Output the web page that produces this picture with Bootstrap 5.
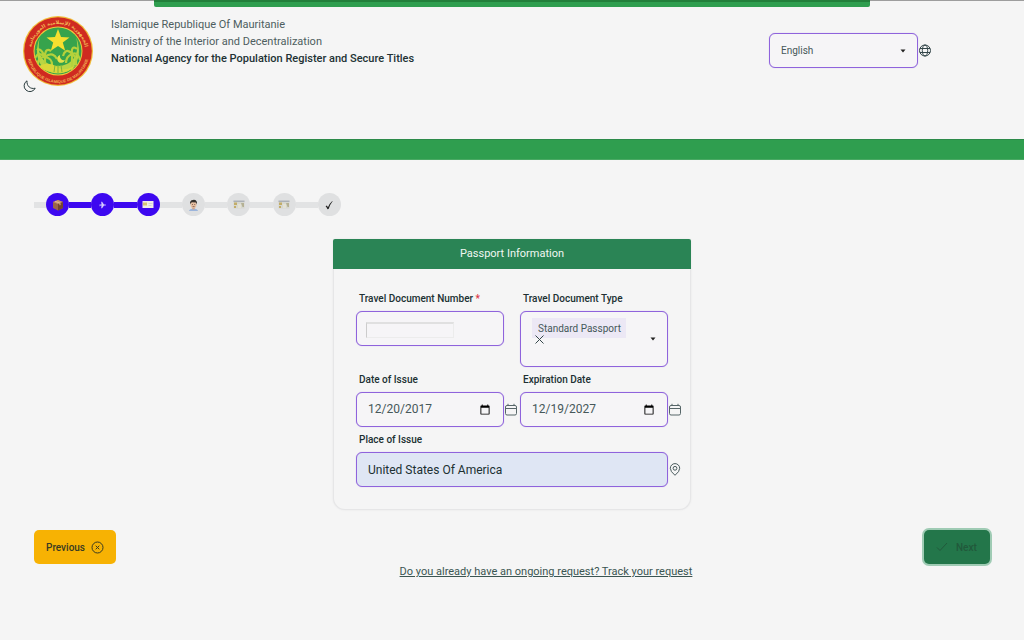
<!DOCTYPE html>
<html lang="en">
<head>
<meta charset="utf-8">
<meta name="viewport" content="width=device-width, initial-scale=1">
<title>Passport Information</title>
<link href="https://cdn.jsdelivr.net/npm/bootstrap@5.3.0/dist/css/bootstrap.min.css" rel="stylesheet">
<style>
body{background:#f5f5f5;color:#2b3d3f;font-family:Roboto,"Liberation Sans",sans-serif;font-size:11px;line-height:17px}
svg{display:block;flex:none}
.top-track{height:7px;border-top:1px solid #9d9d9d}
.top-track span{display:block;width:70%;height:7px;margin:-1px auto 0;background:#2f9e4f;border-top:2px solid #237f3b;border-radius:0 0 2px 2px}
.site-head{min-height:132px;padding:8px 106px 0 23px}
.emblem{position:relative;width:70px}
.theme-btn{position:absolute;left:0;top:65px;padding:0;border:0;background:none;color:#2b3d3f}
.agency{padding:1px 0 0 18px;color:#4d5e60}
.agency strong{font-weight:500;color:#223234}
.field,.number-box{border:1px solid #8f63dc;border-radius:6px;background-color:#f6f5f7;height:35px;box-shadow:0 0 1px #b9a3e6}
.field{color:#46585a;width:100%;padding:0 12px 0 11px;font-size:12px;appearance:none;min-width:0}
select.field{font-size:10px;background-image:url("data:image/svg+xml,%3Csvg xmlns='http://www.w3.org/2000/svg' width='6' height='4'%3E%3Cpath d='M.5.5h5L3 3.5z' fill='%23222'/%3E%3C/svg%3E");background-repeat:no-repeat;background-position:right 11px center}
.lang{width:149px;margin-top:18px}
.band{height:21px;background:#2f9e4f;border-top:1px solid #2c8a49;border-bottom:1px solid #4aa964}
.steps{list-style:none;padding:0;margin:33px 34px 0;max-width:307px}
.steps li{display:flex;align-items:center;flex:1}
.steps li:first-child{flex:none}
.steps li::before{content:"";flex:1;height:6px;background:#e2e3e4}
.steps li:first-child::before{flex:none;width:12px}
.steps .dot{width:23px;height:23px;border-radius:50%;background:#dfe0e1;display:flex;align-items:center;justify-content:center}
.steps .done .dot,.steps .done + .done::before{background:#3d08f0}
.form-card{max-width:358px;margin:23px auto 0;border:1px solid #e6e6e7;border-top:0;border-radius:3px 3px 12px 12px;background:#f5f5f5;box-shadow:0 0 2px #e4e4e5}
.form-card header{height:30px;line-height:30px;background:#2a8455;color:#f0f7f2;text-align:center;border-radius:2px 2px 0 0;font-size:11px;margin:0 -1px}
.form-grid{display:grid;grid-template-columns:1fr 1fr;column-gap:16px;padding:20px 22px 22px}
.form-grid label{height:22px;line-height:20px;padding-left:3px;color:#203032;display:block;font-weight:500;font-size:10px}
.with-icon{position:relative}
.with-icon>svg{position:absolute;left:100%;top:11px}
.number-box{display:flex;align-items:center;padding:0 9px}
.number-box input{width:88px;height:16px;border:1px solid #ececec;border-top:2px solid #e0e0e0;border-left:1px solid #ccc;background:transparent;padding:0 4px;margin-top:3px}
.kind{position:relative}
.kind select.field{height:56px;padding:0 10px 22px 17px;background-image:url("data:image/svg+xml,%3Csvg xmlns='http://www.w3.org/2000/svg' width='6' height='4'%3E%3Cpath d='M.5.5h5L3 3.5z' fill='%23222'/%3E%3C/svg%3E"),linear-gradient(#ece8f5,#ece8f5);background-size:6px 4px,94px 20px;background-position:right 11px center,11px 6px}
.clear-btn{position:absolute;left:15px;top:24px;padding:0;border:0;background:none;color:#35474a}
.third{margin-top:3px}
.field::-webkit-calendar-picker-indicator{width:12px;height:12px;padding:0;margin:0}
input.place{background:#dfe6f4;color:#203032}
.foot{margin:20px 34px 0}
.act{border:0;border-radius:5px;height:34px;font-size:10px;font-weight:500;display:flex;align-items:center}
.prev{background:#f7b203;color:#383a22;padding:0 12px;gap:6px;width:82px}
.next{background:#23764a;color:#21593b;padding:0 12px;gap:8px;width:66px;box-shadow:0 0 0 2px #9fcbb4}
.track-link{color:#3b5552;font-size:11px;padding:33px 0 0 52px}
</style>
</head>
<body>
<div class="top-track"><span></span></div>
<header class="site-head d-flex align-items-start">
  <div class="emblem">
    <svg width="70" height="72" viewBox="0 0 70 72" role="img" aria-label="Seal of Mauritania">
      <defs><path id="arcUp" d="M8 36A27 27 0 0 1 62 36"/><path id="arcDown" d="M4 37A31 31 0 0 0 66 37"/></defs>
      <circle cx="35" cy="36" r="35" fill="#f0bd39"/><circle cx="35" cy="36" r="33.800" fill="#cf2a20"/>
      <circle cx="35" cy="36" r="24.500" fill="#f0c63c"/><circle cx="35" cy="36" r="23.500" fill="#36a34c"/>
      <path d="M17 22C9 42 18 58 35 58.500C52 58 61 42 53 22C58 40 48 51 35 51S12 40 17 22Z" fill="#b9d544"/>
      <path d="M35 14l3 8 8.500.4-6.700 5.200 2.400 8.200-7.200-4.700-7.200 4.700 2.400-8.200-6.700-5.200 8.500-.4Z" fill="#f7df2f"/>
      <g stroke="#b5d13b" stroke-width="2.200" fill="none"><path d="M22 55V42M22 42C17 37 14 39 12 43M22 42C18 33 15 34 14 35M22 42C22 34 25 34 28 36M22 42C28 37 32 40 34 44M22 42C17 42 15 45 15 49M22 42C28 43 29 46 29 50M49 55V39M49 39C44 33 41 37 40 41M49 39C48 31 52 32 54 34M49 39C54 37 56 41 57 45M49 39C44 41 43 45 43 48M49 39C54 42 53 46 53 50"/></g>
      <path d="M16 51q10-5 18 1t20-3q-7 9-19 9T16 51Z" fill="#d9d839"/><path d="M37 40a4 4 0 1 0 5 5 4 4 0 0 1-5-5" fill="#e3e24a"/>
      <path d="M31 57l1-7M35 58v-8M39 57l-1-7" stroke="#7cb53c" fill="none"/>
      <text font-family="DejaVu Sans" font-size="5" font-weight="bold" fill="#f2b955"><textPath href="#arcUp" startOffset="50%" text-anchor="middle">الجمهورية الإسلامية الموريتانية</textPath></text>
      <text font-family="Liberation Sans" font-size="4" font-weight="bold" fill="#f2b055"><textPath href="#arcDown" startOffset="50%" text-anchor="middle">REPUBLIQUE ISLAMIQUE DE MAURITANIE</textPath></text>
    </svg>
    <button type="button" class="theme-btn" aria-label="Dark mode"><svg width="13" height="13" viewBox="0 0 13 13" fill="#f5f5f5" stroke="currentColor" stroke-linejoin="round"><path d="M4 .8A5.800 5.800 0 1 0 12.200 8.200C7.500 9.500 3.500 6 4 .8Z"/></svg></button>
  </div>
  <div class="agency flex-grow-1">Islamique Republique Of Mauritanie<br>Ministry of the Interior and Decentralization<br><strong>National Agency for the Population Register and Secure Titles</strong></div>
  <div class="with-icon lang">
    <select class="field" aria-label="Language"><option>English</option></select>
    <svg width="13" height="13" viewBox="0 0 13 13" fill="none" stroke="#34474a"><circle cx="7" cy="6.500" r="5.500"/><ellipse cx="7" cy="6.500" rx="2.700" ry="5.500"/><path d="M2 4.500h10M2 8.500h10"/></svg>
  </div>
</header>
<div class="band"></div>
<main>
  <ol class="steps d-flex">
    <li class="done"><span class="dot"><svg width="12" height="12" viewBox="0 0 12 12"><path d="M1 3l5-2 5 2v6l-5 2.500L1 9Z" fill="#9b6548"/><path d="M1 3l5-2 5 2-5 2Z" fill="#c8936c"/><path d="M6 5l5-2v6l-5 2.500Z" fill="#75452f"/><path d="M3 2.200l5 2v2" stroke="#e0b991" fill="none"/></svg></span></li>
    <li class="done"><span class="dot"><svg width="8" height="8" viewBox="0 0 8 8"><path d="M.5 3.500h2L2.200.8h.9L5 3.500h1.500q1.200.5 0 1H5L3.100 7.200h-.9l.3-2.700h-1L.7 5.500Z" fill="#d5cbff"/></svg></span></li>
    <li class="done"><span class="dot"><svg width="12" height="9" viewBox="0 0 12 9"><path d="M.5 1h11v7H.5Z" fill="#f1eee6"/><path d="M1 2.500h4v3H1Z" fill="#d6c574"/><path d="M6.500 3.500h4M6.500 5.500h3" stroke="#cfcbd2" stroke-width=".8"/></svg></span></li>
    <li><span class="dot"><svg width="11" height="12" viewBox="0 0 11 12"><path d="M1 12q.5-2.500 4.500-2.500T10 12Z" fill="#9cb5dc"/><path d="M4.300 8h2.400v2.400H4.300Z" fill="#cfa184"/><ellipse cx="5.500" cy="5.500" rx="3" ry="3.700" fill="#e5bea0"/><path d="M2 5.500Q1.500 1 5 .9q4.500-.5 4 4.600L8 3.600 4 3.300 2.800 4Z" fill="#35302c"/><path d="M4 5.500h1M6.200 5.500h1M4.600 7.600h2" stroke="#69483c" stroke-width=".7"/></svg></span></li>
    <li><span class="dot"><svg width="12" height="9" viewBox="0 0 12 9"><path d="M.5.500h11v8H.5Z" fill="#d6d7d0"/><path d="M.5 1.200h11" stroke="#999eaa"/><path d="M1 2.500h3v2.500H1ZM1 6h2v2H1Z" fill="#c2ad69"/><path d="M4 4h4v4H5V5Z" fill="#e4e2d4"/><path d="M8 3h3v4H9.500Z" fill="#b5b194"/></svg></span></li>
    <li><span class="dot"><svg width="12" height="9" viewBox="0 0 12 9"><path d="M.5.500h11v8H.5Z" fill="#d6d7d0"/><path d="M.5 1.200h11" stroke="#999eaa"/><path d="M1 2.500h3v2.500H1ZM1 6h2v2H1Z" fill="#c2ad69"/><path d="M4 4h4v4H5V5Z" fill="#e4e2d4"/><path d="M8 3h3v4H9.500Z" fill="#b5b194"/></svg></span></li>
    <li><span class="dot"><svg width="8" height="10" viewBox="0 0 8 10"><path d="M.6 6.200l1.300-.8 1 1.800Q4.800 3 7.300.9L7.600 1.200Q5 4.500 3.600 9L2.500 9.200Q1.700 7 .6 6.200Z" fill="#222"/></svg></span></li>
  </ol>
  <form class="form-card" id="passport">
    <header>Passport Information</header>
    <div class="form-grid">
      <div><label for="num">Travel Document Number <span class="text-danger">*</span></label><div class="number-box"><input id="num" type="text"></div></div>
      <div><label for="kind">Travel Document Type</label><div class="kind"><select id="kind" class="field"><option>Standard Passport</option></select><button type="button" class="clear-btn" aria-label="Clear type"><svg width="9" height="9" viewBox="0 0 9 9" stroke="currentColor"><path d="M.5.5l8 8M8.500.5l-8 8"/></svg></button></div></div>
      <div class="third"><label for="issue">Date of Issue</label><div class="with-icon"><input id="issue" type="date" class="field" value="2017-12-20"><svg width="13" height="13" viewBox="0 0 13 13" fill="none" stroke="#566668"><rect x="1.500" y="2.500" width="11" height="9.500" rx="1.500"/><path d="M1.500 5.500h11M4 .8v2M10 .8v2"/></svg></div></div>
      <div class="third"><label for="expiry">Expiration Date</label><div class="with-icon"><input id="expiry" type="date" class="field" value="2027-12-19"><svg width="13" height="13" viewBox="0 0 13 13" fill="none" stroke="#566668"><rect x="1.500" y="2.500" width="11" height="9.500" rx="1.500"/><path d="M1.500 5.500h11M4 .8v2M10 .8v2"/></svg></div></div>
      <div class="third" style="grid-column:1/-1"><label for="place">Place of Issue</label><div class="with-icon"><input id="place" type="text" class="field place" value="United States Of America"><svg width="13" height="13" viewBox="0 0 13 13" fill="none" stroke="#4a5b5d"><path d="M7 12.300Q2.300 8.500 2.300 5.300a4.700 4.700 0 0 1 9.400 0Q11.700 8.500 7 12.300Z"/><circle cx="7" cy="5.300" r="1.900"/></svg></div></div>
    </div>
  </form>
  <div class="foot d-flex justify-content-between align-items-start">
    <button type="button" class="act prev">Previous <svg width="13" height="13" viewBox="0 0 13 13" fill="none" stroke="currentColor"><circle cx="6.500" cy="6.500" r="5.500"/><path d="M4.700 4.700l3.600 3.600M8.300 4.700L4.700 8.300"/></svg></button>
    <a href="#" class="track-link">Do you already have an ongoing request? Track your request</a>
    <button type="submit" form="passport" class="act next"><svg width="12" height="10" viewBox="0 0 12 10" fill="none" stroke="currentColor"><path d="M1 5.500l3 3L11 1"/></svg>Next</button>
  </div>
</main>
<script src="https://cdn.jsdelivr.net/npm/bootstrap@5.3.0/dist/js/bootstrap.bundle.min.js"></script>
</body>
</html>
